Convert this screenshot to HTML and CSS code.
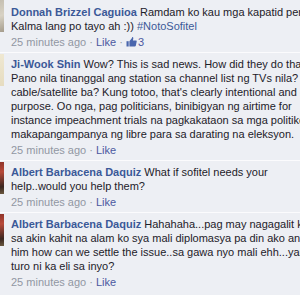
FILE: index.html
```html
<!DOCTYPE html>
<html>
<head>
  <meta charset="UTF-8">
  <link rel="stylesheet" href="styles.css">
</head>
<body>
  <div class="thread">
    <!-- comentario 1 -->
    <div class="comment first">
      <div class="avatar av-donnah"></div>
      <div class="body">
        <div class="text"><a class="name">Donnah Brizzel Caguioa</a> Ramdam ko kau mga kapatid pero<br>Kalma lang po tayo ah :)) <a class="tag">#NotoSofitel</a></div>
        <div class="meta">25 minutes ago · <a class="like">Like</a> · <span class="likes"><svg width="11" height="10" viewBox="0 0 11 10"><path d="M0.5 4.2h2.2v5.3H0.5z" fill="#4a66ad"/><path d="M3.4 4.3 5.6 1.5c.3-.5.6-1 .7-1.5.7 0 1.2.6 1 1.4L6.9 3.6h3c.6 0 .9.4.8 1l-.9 4.1c-.1.5-.5.8-1 .8H3.4z" fill="#4a66ad"/></svg>3</span></div>
      </div>
    </div>

    <div class="comment">
      <div class="avatar av-jiwook"></div>
      <div class="body">
        <div class="text"><a class="name">Ji-Wook Shin</a> Wow? This is sad news. How did they do that?<br>Pano nila tinanggal ang station sa channel list ng TVs nila? Na<br>cable/satellite ba? Kung totoo, that's clearly intentional and on<br>purpose. Oo nga, pag politicians, binibigyan ng airtime for<br>instance impeachment trials na pagkakataon sa mga politiko<br>makapangampanya ng libre para sa darating na eleksyon.</div>
        <div class="meta">25 minutes ago · <a class="like">Like</a></div>
      </div>
    </div>

    <div class="comment">
      <div class="avatar av-albert"></div>
      <div class="body">
        <div class="text"><a class="name">Albert Barbacena Daquiz</a> What if sofitel needs your<br>help..would you help them?</div>
        <div class="meta">25 minutes ago · <a class="like">Like</a></div>
      </div>
    </div>

    <div class="comment">
      <div class="avatar av-albert"></div>
      <div class="body">
        <div class="text"><a class="name">Albert Barbacena Daquiz</a> Hahahaha...pag may nagagalit ka<br>sa akin kahit na alam ko sya mali diplomasya pa din ako and<br>him how can we settle the issue..sa gawa nyo mali ehh...yan<br>turo ni ka eli sa inyo?</div>
        <div class="meta">25 minutes ago · <a class="like">Like</a></div>
      </div>
    </div>
  </div>
</body>
</html>
```

FILE: styles.css
```css
* {
  margin: 0;
  padding: 0;
  box-sizing: border-box;
}

body {
  background: #edeff4;
  font-family: "Liberation Sans", Arial, sans-serif;
  font-size: 11px;
  color: #1d2129;
  overflow: hidden;
}

.thread {
  width: 300px;
  overflow: hidden;
}

.comment {
  display: flex;
  align-items: flex-start;
  border-top: 1px solid #fbfbfd;
  padding: 1px 0 3px;
}

.comment.first {
  border-top: none;
  padding-top: 0;
}

.comment.first .body {
  padding-top: 5px;
}

.avatar {
  flex: none;
  width: 32px;
  height: 32px;
  margin-left: -28px;
  margin-right: 7px;
}

.av-donnah {
  background: linear-gradient(160deg, #b9b3a6, #d8d2c4 60%, #a59c8c);
}

.av-jiwook {
  background: linear-gradient(180deg, #efe8d2, #e6dcc0);
}

.av-albert {
  background: linear-gradient(170deg, #7b2a22, #b84a3a 40%, #3b2620 80%, #6c5a40);
}

.body {
  flex: 1;
  padding-top: 3px;
  white-space: nowrap;
}

.text {
  line-height: 14px;
}

.name {
  color: #3b5998;
  font-weight: bold;
}

.tag {
  color: #3b5998;
}

.meta {
  margin-top: 2px;
  line-height: 14px;
  color: #9197a3;
}

.like {
  color: #4b58a0;
}

.likes {
  color: #4b58a0;
}

.likes svg {
  vertical-align: -1px;
  margin-right: 1px;
}
```
